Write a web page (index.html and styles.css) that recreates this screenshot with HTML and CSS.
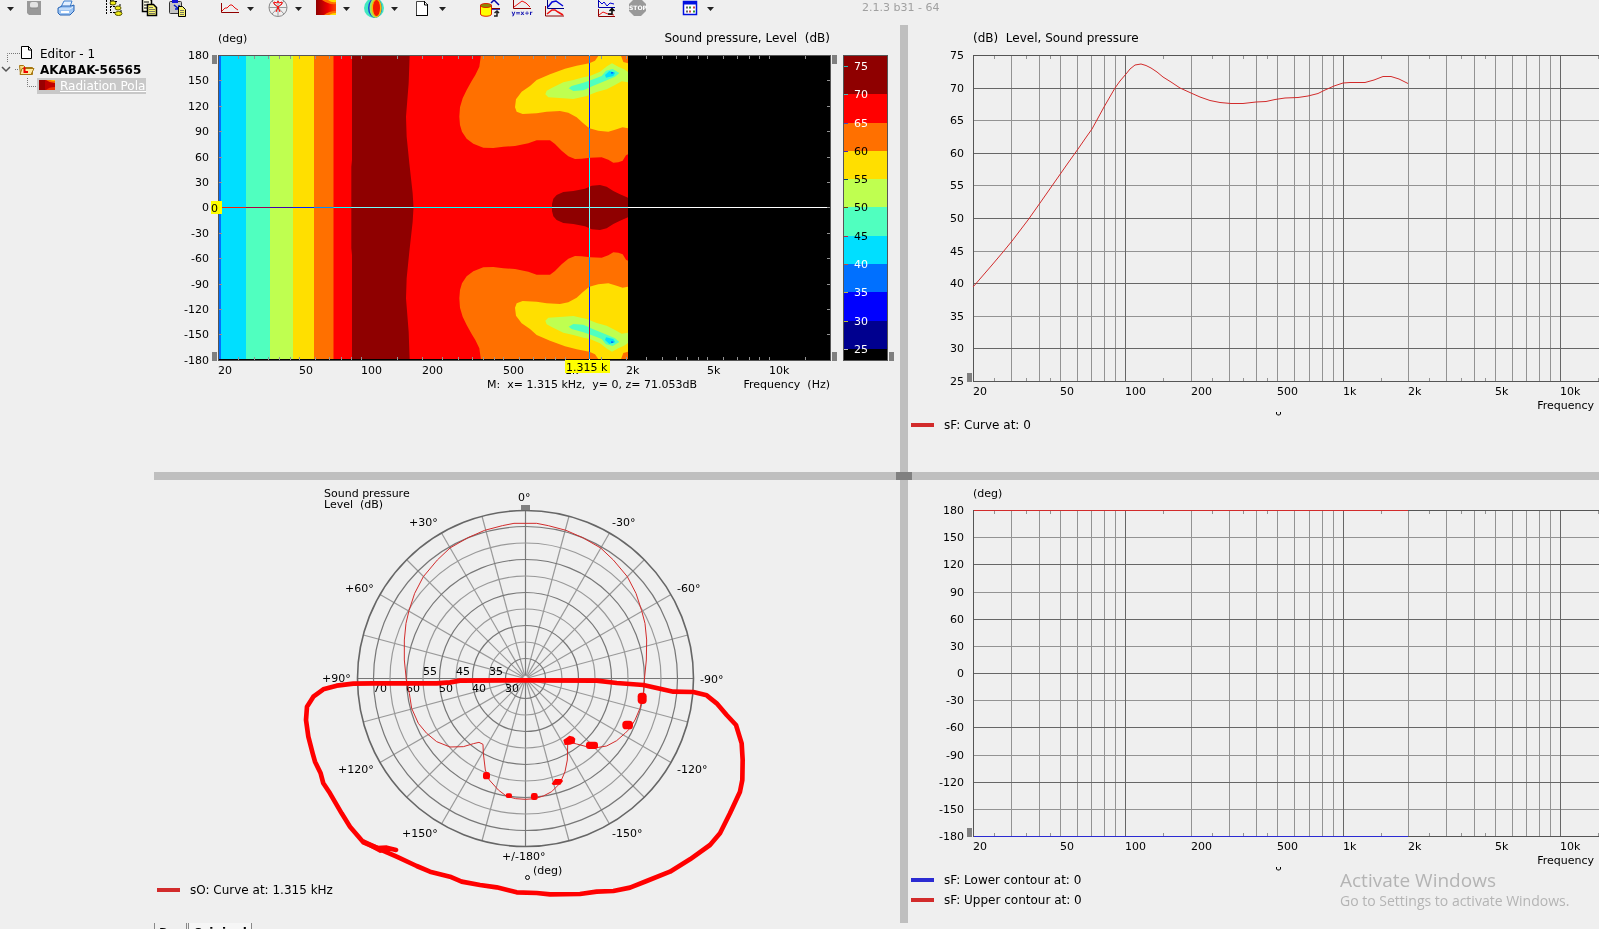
FILE: index.html
```html
<!DOCTYPE html>
<html lang="en">
<head>
<meta charset="utf-8">
<title>AKABAK-56565</title>
<link rel="stylesheet" href="styles.css">
</head>
<body>
<header class="toolbar">
  <div class="group group-file">
    <button class="drop" aria-label="File menu"><svg viewBox="0 0 8 17"><path d="M3 7h7L6.500 11z"/></svg></button>
    <button class="tool" aria-label="Save"><svg viewBox="0 0 20 17"><path d="M3 1h14v14H5l-2-2z" fill="#999"/><rect x="6" y="2" width="8" height="6" rx="2" fill="#e4e4e4"/><path d="M6 8h8" stroke="#888"/></svg></button>
    <button class="tool" aria-label="Print"><svg viewBox="0 0 20 17"><path d="M5 7l3-6h8l-2 6z" fill="#e3f0ff" stroke="#3c7fd0"/><path d="M2 8l4-2h9l3-1v6l-4 4H4l-2-2z" fill="#9cc4f3" stroke="#2864b4"/><path d="M3 9h11l3-2" fill="none" stroke="#eaf4ff"/><path d="M5 12h8" stroke="#fff" stroke-width="2"/></svg></button>
  </div>
  <div class="group group-edit">
    <button class="tool" aria-label="Tree"><svg viewBox="0 0 20 17"><path d="M2.500 0v14M6.500 0v13M6 6.500h5M6 12.500h5" stroke="#000" stroke-dasharray="2 1" fill="none"/><g fill="#f1ed1b" stroke="#555200"><ellipse cx="9" cy="3" rx="3" ry="2"/><ellipse cx="14" cy="8" rx="3" ry="2"/><ellipse cx="14.500" cy="13.500" rx="3.500" ry="2"/></g><path d="M7 0h3M11 1.500h2M15 5h2M16 11h2" stroke="#000"/></svg></button>
    <button class="tool" aria-label="Copy"><svg viewBox="0 0 20 17"><path d="M6.500-2.500h6l3 3v11h-9z" fill="#ffffe8" stroke="#000" stroke-width="1.500"/><path d="M8 2h5M8 5h4M8 8h4" stroke="#000"/><path d="M11.500 4.500h6l3 3v8h-9z" fill="#f7f370" stroke="#000" stroke-width="1.500"/><path d="M13 7.500h4M13 9.500h6M13 11.500h6M13 13.500h6" stroke="#776"/></svg></button>
    <button class="tool" aria-label="Paste"><svg viewBox="0 0 20 17"><rect x="1.500" y="1.500" width="12" height="12" rx="1" fill="#c4c4c4" stroke="#333"/><path d="M4 0h6v3H4z" fill="#1414d8"/><path d="M6 5l5 4M11 5v4H7" stroke="#0018c8" stroke-width="1.500" fill="none"/><path d="M10.500 6.500h4l3 3v7h-7z" fill="#f6f26c" stroke="#000"/><path d="M12 10.500h4M12 12.500h4M12 14.500h4" stroke="#776"/></svg></button>
  </div>
  <div class="group group-views">
    <div class="split">
      <button class="tool" aria-label="Curve"><svg viewBox="0 0 20 17"><path d="M1.500 3v9.500H19" stroke="#8f0000" fill="none"/><path d="M2 11l3-3h2l3-3h2l3 3 3 2" stroke="#e81010" fill="none"/></svg></button>
      <button class="drop" aria-label="Curve options"><svg viewBox="0 0 8 17"><path d="M1 7h7L4.500 11z"/></svg></button>
    </div>
    <div class="split">
      <button class="tool" aria-label="Polar"><svg viewBox="0 0 20 17"><circle cx="10" cy="7.500" r="9" fill="none" stroke="#888"/><path d="M1 7.500h18M10 0v17M4 1l12 13M16 1L4 14" stroke="#999"/><path d="M10 7L6 4V2l3 1 1-2 1 2 3-1v2zM10 7l-2 5M10 7l2 5" fill="none" stroke="#f00"/></svg></button>
      <button class="drop" aria-label="Polar options"><svg viewBox="0 0 8 17"><path d="M1 7h7L4.500 11z"/></svg></button>
    </div>
    <div class="split">
      <button class="tool" aria-label="Contour"><svg viewBox="0 0 20 17"><defs><linearGradient id="heat"><stop offset="0" stop-color="#8f0000"/><stop offset=".6" stop-color="#e00"/><stop offset="1" stop-color="#f40"/></linearGradient></defs><path d="M0 0h20v15H0z" fill="url(#heat)"/><path d="M6 0q7 5 14 4V0zM8 15q5-4 12-4v4z" fill="#ff7000"/><path d="M12 0q4 3 8 2V0zM13 15q3-2 7-2v2z" fill="#ffdf00"/></svg></button>
      <button class="drop" aria-label="Contour options"><svg viewBox="0 0 8 17"><path d="M1 7h7L4.500 11z"/></svg></button>
    </div>
    <div class="split">
      <button class="tool" aria-label="Balloon"><svg viewBox="0 0 20 17"><circle cx="10" cy="8" r="10" fill="#40e8c0"/><ellipse cx="11" cy="8" rx="7" ry="10" fill="#1745d8"/><ellipse cx="11.500" cy="8" rx="6" ry="10" fill="#9be860"/><ellipse cx="12.500" cy="8" rx="5" ry="9" fill="#ffb000"/><ellipse cx="12.500" cy="8" rx="3.500" ry="8" fill="#f21800"/></svg></button>
      <button class="drop" aria-label="Balloon options"><svg viewBox="0 0 8 17"><path d="M1 7h7L4.500 11z"/></svg></button>
    </div>
    <div class="split">
      <button class="tool" aria-label="New page"><svg viewBox="0 0 20 17"><path d="M4.500 1.500h8l3 3v11h-11z" fill="#fff" stroke="#444"/><path d="M12.500 1v4H16M15.500 4v11.500H4" fill="none" stroke="#000"/></svg></button>
      <button class="drop" aria-label="Page options"><svg viewBox="0 0 8 17"><path d="M1 7h7L4.500 11z"/></svg></button>
    </div>
  </div>
  <div class="group group-data">
    <button class="tool" aria-label="Data"><svg viewBox="0 0 20 17"><path d="M11 3l3-3 5 5M12 9h8" stroke="#0000a8" stroke-width="1.500" fill="none"/><path d="M12 8.500h8" stroke="#800000"/><path d="M.5 5v9c0 3 11 3 11 0V5z" fill="#ff0" stroke="#e02000"/><ellipse cx="6" cy="5.500" rx="5.500" ry="2" fill="#8b8b00" stroke="#e02000"/><path d="M14 16h3v-4M14.500 13l2.500-2 2 2" stroke="#222" stroke-width="1.500" fill="none"/></svg></button>
    <button class="tool" aria-label="Formula"><svg viewBox="0 0 20 17"><path d="M1.500 0v8.500H19" stroke="#8f0000" fill="none"/><path d="M2 7l4-3 4-3 4 2 4 4" stroke="#f01010" fill="none"/><text x="10" y="15" class="icon-text">y=x+r</text></svg></button>
    <button class="tool" aria-label="Compare"><svg viewBox="0 0 20 17"><path d="M3.500 0v8.500H20" stroke="#000080" fill="none"/><path d="M4 7l4-5 4-1 7 5" stroke="#0808d8" stroke-width="1.500" fill="none"/><path d="M1.500 6v10H20" stroke="#8f0000" fill="none"/><path d="M3 14l5-4h3l3 2 5 3" stroke="#f01010" stroke-width="1.500" fill="none"/></svg></button>
  </div>
  <div class="group group-run">
    <button class="tool" aria-label="Process"><svg viewBox="0 0 20 17"><path d="M2.500 0v7.500H19" stroke="#0000a8" fill="none"/><path d="M3 1l3 3 2-2 3 4 3-3 4 1" stroke="#0000d8" fill="none"/><path d="M2.500 9v7.500H19" stroke="#8f0000" fill="none"/><path d="M3 15l4-3 5 2 6 1" stroke="#f01010" fill="none"/><path d="M12 14h4V9M13.500 11L16 8.500l2.500 2.500" stroke="#000" stroke-width="1.500" fill="none"/></svg></button>
    <button class="tool" aria-label="Stop"><svg viewBox="0 0 20 17"><path d="M6-1h7l5 5v7l-5 5H6l-5-5V4z" fill="#999"/><text x="10" y="10" class="stop-text">STOP</text></svg></button>
  </div>
  <div class="group group-table">
    <div class="split">
      <button class="tool" aria-label="Table"><svg viewBox="0 0 20 17"><path d="M3.500 1.500h13v13h-13z" fill="#fff" stroke="#0010e0" stroke-width="1.500"/><path d="M3 3h14" stroke="#0010e0" stroke-width="3"/><path d="M6 7.500h2M6 11.500h2" stroke="#666" stroke-width="2"/><path d="M9 7.500h2M13 11.500h2" stroke="#393" stroke-width="2"/><path d="M13 7.500h2M9 11.500h2" stroke="#c44" stroke-width="2"/></svg></button>
      <button class="drop" aria-label="Table options"><svg viewBox="0 0 8 17"><path d="M1 7h7L4.500 11z"/></svg></button>
    </div>
  </div>
  <span class="version">2.1.3 b31 - 64</span>
</header>

<main class="workspace">
  <nav class="sidebar">
    <ul class="tree">
      <li class="row row-editor">
        <svg class="row-lead" viewBox="0 0 40 16"><path d="M7.500 16V7.500H20" class="dots"/><path d="M21.500 .5h7l3 3v9h-10z" fill="#fff" stroke="#000"/><path d="M28.500 0v4H32" fill="none" stroke="#000"/></svg><a href="#editor">Editor - 1</a>
      </li>
      <li class="row row-project">
        <svg class="row-lead" viewBox="0 0 40 16"><path d="M2 5l4 4 4-4" fill="none" stroke="#555" stroke-width="1.500"/><path d="M15 7.500h4" class="dots"/><path d="M19.500 3.500h4l2 2h7v7h-12z" fill="#f7dc86" stroke="#a67711"/><path d="M22 6.500h12l-3 6H20z" fill="#ffe9a0" stroke="#a67711"/><path d="M24.500 5v5H28" fill="none" stroke="#e00" stroke-width="2"/></svg><a href="#project">AKABAK-56565</a>
      </li>
      <li class="row row-selected">
        <svg class="row-guide" viewBox="0 0 37 16"><path d="M27.500 0v8.500H37" class="dots"/></svg><a href="#radiation"><svg class="row-heat" viewBox="0 0 23 16"><path d="M2 2h16v10H2z" fill="#c00000"/><path d="M2 2h6v10H2z" fill="#900"/><path d="M9 2q4 3 9 3V2z" fill="#ff7000"/><path d="M13 2q2 1 5 1V2z" fill="#ffd000"/><path d="M9 12q3-3 9-3v3z" fill="#f03000"/></svg><span>Radiation Polar</span></a>
      </li>
    </ul>
  </nav>

  <section class="pane pane-contour" aria-label="Contour plot">
    <svg class="chart" viewBox="154 25 746 447">
      <defs>
        <clipPath id="upper"><path d="M219 56h409v152H219z"/></clipPath>
        <g id="field">
          <g clip-path="url(#upper)">
            <path d="M219 56h409v152H219z" fill="#f00"/>
            <path d="M219 56h3v152h-3z" fill="#0070ff"/>
            <path d="M221 56h25v152h-25z" fill="#00dfff"/>
            <path d="M246 56h24v152h-24z" fill="#50ffbf"/>
            <path d="M270 56h23v152h-23z" fill="#bfff50"/>
            <path d="M293 56h21v152h-21z" fill="#ffdf00"/>
            <path d="M314 56h19.500v152H314z" fill="#ff7000"/>
            <g transform="translate(200 20) scale(.33333)">
              <path d="M456 105H629L626 190 618 290 620 350 628 430 638 520 641 570H454V440L456 420z" fill="#8f0000"/>
              <path d="M843 105L838 140 826 165 815 183 800 210 788 235 780 262 778 290 780 315 786 335 800 356 820 371 850 383 880 384 910 380 945 378 985 370 1010 361 1050 361 1065 372 1085 392 1105 409 1125 417 1145 416 1170 413 1205 412 1225 419 1240 428 1255 427 1268 422 1278 406 1285 402V105z" fill="#ff7000"/>
              <path d="M1197 105L1185 122 1168 130 1130 137 1095 146 1050 163 1010 180 990 198 965 215 948 238 945 262 950 275 968 282 1010 280 1040 275 1080 273 1105 278 1130 292 1148 308 1168 325 1195 332 1225 335 1245 329 1268 322 1285 325V130L1270 126 1262 105z" fill="#ffdf00"/>
              <path d="M1036 223L1040 212 1055 204 1090 187 1120 180 1150 172 1170 168 1200 155 1222 138 1236 130 1255 140 1272 148 1285 157V187L1265 184 1245 195 1220 208 1190 216 1160 228 1120 237 1090 235 1045 232z" fill="#bfff50"/>
              <path d="M1106 205L1115 198 1150 188 1180 178 1205 168 1218 152 1238 147 1258 159 1245 170 1215 183 1180 197 1150 211 1120 213z" fill="#50ffbf"/>
              <path d="M1215 165L1228 153 1246 158 1240 168 1218 173z" fill="#00dfff"/>
              <path d="M1233 156h7v5h-7z" fill="#0070ff"/>
              <path d="M1056 570V552L1060 536 1070 525 1090 516 1120 513 1155 506 1175 497 1200 495 1220 500 1240 513 1260 523 1285 534V570z" fill="#8f0000"/>
            </g>
          </g>
        </g>
      </defs>
      <path d="M218 55h613v306H218z" fill="#000"/>
      <use href="#field"/>
      <use href="#field" transform="translate(0 415) scale(1 -1)"/>
      <g id="contour-axes"></g>
      <path class="frame" d="M218.500 55.500h612v305h-612z"/>
      <g class="cursor"><path d="M589.500 55v306M222 207.500h605"/></g>
      <path class="handle" d="M212 55h5v9h-5zM212 352h5v9h-5zM832 55h5v9h-5zM832 352h5v9h-5zM889 352h5v9h-5z"/>
      <g id="colorbar"></g>
      <path d="M211 201h11v13h-11zM565 360h45v13h-45z" fill="#ff0"/>
      <text x="211" y="212">0</text>
      <text x="566" y="371">1.315 k</text>
      <text x="218" y="42">(deg)</text>
      <text x="830" y="42" class="caption end">Sound pressure, Level  (dB)</text>
      <text x="487" y="388">M:  x= 1.315 kHz,  y= 0, z= 71.053dB</text>
      <text x="830" y="388" class="end">Frequency  (Hz)</text>
    </svg>
  </section>

  <section class="pane pane-level" aria-label="Level over frequency">
    <svg class="chart" viewBox="908 25 691 447">
      <g id="level-axes"></g>
      <path class="curve" d="M973 287L992 265 1003 252 1012 241 1028 220 1040 203 1061 173 1068 163 1078 149 1087 136 1092 129 1104 107 1115 88 1120 81 1126 74 1130 69 1135 65 1141 64 1146 65.500 1151 68 1157 72 1163 77 1171 82 1180 88 1191 93 1200 97 1210 100.500 1220 102.500 1231 103.500 1243 103.500 1256 102 1266 101.500 1275 99.500 1285 98 1298 97.500 1308 96 1318 93.500 1325 90 1334 86 1343 83 1350 82.500 1365 82.500 1374 80 1383 76.500 1391 76.500 1399 79 1408 83.500"/>
      <text x="973" y="42" class="caption">(dB)  Level, Sound pressure</text>
      <text x="1594" y="409" class="end">Frequency</text>
      <path class="mark" d="M1276.500 412v2l1 1h2l1-1v-2"/>
      <path class="handle" d="M967 373h5v9h-5z"/>
      <path d="M911 423h23v4h-23z" fill="#d22b2b"/>
      <text x="944" y="429" class="caption">sF: Curve at: 0</text>
    </svg>
  </section>

  <section class="pane pane-polar" aria-label="Polar plot">
    <svg class="chart" viewBox="154 480 746 443">
      <g id="polar-grid"></g>
      <path class="handle" d="M521 505h9v5h-9z"/>
      <g id="polar-labels"></g>
      <text x="324" y="497">Sound pressure</text>
      <text x="324" y="508">Level  (dB)</text>
      <text x="533" y="874">(deg)</text>
      <circle class="mark" cx="527.500" cy="877.500" r="2"/>
      <g transform="translate(290 480) scale(.33333)">
        <path class="lobe" d="M706 130H740L775 137 828 151 880 174 932 204 970 240 1012 290 1038 340 1055 392 1065 430 1070 480 1069 540 1063 600 1060 640 1050 685 1035 720 1020 745 1005 760 980 782 950 798 920 803 890 800 860 792 838 786 833 795 832 840 825 875 810 910 785 935 760 948 735 956 706 958 677 956 650 949 625 930 598 900 586 870 580 820 579 793 567 787 550 791 520 800 480 801 440 785 410 760 385 730 365 685 358 640 349 600 343 540 343 480 348 430 357 392 374 340 400 290 442 240 480 204 532 174 584 151 637 137 672 130z"/>
        <path class="scribble" d="M318 1110L290 1103 262 1104 220 1087 180 1040 155 1000 120 940 100 910 92 880 75 845 68 820 55 770 48 720 51 680 70 650 100 628 140 617 190 611 250 610 440 610 480 607 510 602 700 601 920 602 980 609 1060 615 1110 626 1150 635 1210 636 1250 646 1280 670 1310 705 1338 735 1355 790 1358 840 1357 900 1350 935 1320 1000 1290 1060 1260 1095 1200 1138 1140 1175 1070 1203 1020 1223 970 1233 920 1235 870 1242 780 1243 740 1239 680 1237 620 1222 570 1215 515 1205 480 1190 420 1175 380 1158 320 1130 270 1108 220 1087"/>
        <path d="M216 1090l6-12 44 20 28 3v12l-24 6z" fill="#f00"/>
        <g fill="#f00">
          <rect x="1043" y="638" width="27" height="34" rx="11"/>
          <rect x="997" y="722" width="32" height="26" rx="11"/>
          <path d="M820 780l10-7 8-6 12 3 6 6-2 14-14 4-16 1z"/>
          <rect x="888" y="785" width="36" height="22" rx="9"/>
          <rect x="579" y="876" width="21" height="22" rx="8"/>
          <rect x="647" y="940" width="19" height="14" rx="6"/>
          <rect x="723" y="939" width="20" height="21" rx="7"/>
          <path d="M785 911l10-14h20l4 6-8 11-22 1z"/>
        </g>
      </g>
      <path d="M157 888h23v4h-23z" fill="#d22b2b"/>
      <text x="190" y="894" class="caption">sO: Curve at: 1.315 kHz</text>
    </svg>
  </section>

  <section class="pane pane-angle" aria-label="Contour angle over frequency">
    <svg class="chart" viewBox="908 480 691 443">
      <g id="angle-axes"></g>
      <path d="M974 510.500h434" stroke="#d22b2b"/>
      <path d="M974 836.500h434" stroke="#2b2bd2"/>
      <text x="973" y="497">(deg)</text>
      <text x="1594" y="864" class="end">Frequency</text>
      <path class="mark" d="M1276.500 867v2l1 1h2l1-1v-2"/>
      <path class="handle" d="M967 828h5v9h-5z"/>
      <path d="M911 878h23v4h-23z" fill="#2b2bd2"/>
      <text x="944" y="884" class="caption">sF: Lower contour at: 0</text>
      <path d="M911 898h23v4h-23z" fill="#d22b2b"/>
      <text x="944" y="904" class="caption">sF: Upper contour at: 0</text>
    </svg>
    <div class="activate">
      <p class="activate-title">Activate Windows</p>
      <p class="activate-text">Go to Settings to activate Windows.</p>
    </div>
  </section>

  <div class="bar bar-x"></div>
  <div class="bar bar-y"><span class="grip"></span></div>
</main>

<footer class="tabs">
  <button class="tab">Doc</button>
  <button class="tab tab-active">Original</button>
</footer>
<script src="charts.js"></script>
</body>
</html>
```

FILE: styles.css
```css
* { box-sizing: border-box; }

html, body { height: 100%; }

body {
  margin: 0;
  display: flex;
  flex-direction: column;
  overflow: hidden;
  background: #efefef;
  color: #000;
  font: 11px/16px "DejaVu Sans", Verdana, sans-serif;
}

button {
  padding: 0;
  border: 0;
  background: none;
  color: inherit;
  font: inherit;
}

a { color: inherit; text-decoration: none; }

.toolbar {
  display: flex;
  flex: none;
  align-items: flex-start;
  height: 25px;
  overflow: hidden;
}

.group { display: flex; gap: 12px; }
.group-file { margin-left: 4px; }
.group-edit { margin-left: 28px; }
.group-views { margin-left: 32px; gap: 14px; }
.group-data { margin-left: 34px; }
.group-run, .group-table { margin-left: 32px; }
.split { display: flex; gap: 6px; }

.tool { width: 20px; height: 17px; }
.drop { width: 8px; height: 17px; }
.tool svg, .drop svg { display: block; width: 100%; height: 17px; overflow: visible; }
.drop svg { fill: #222; }

.icon-text { font-size: 6px; font-weight: bold; fill: #1010b0; text-anchor: middle; }
.stop-text { font-size: 6px; font-weight: bold; fill: #fff; text-anchor: middle; }

.version {
  margin-left: 148px;
  color: #a0a0a0;
  line-height: 16px;
}

.workspace {
  display: grid;
  flex: none;
  grid-template-columns: 154px minmax(0, 746fr) 8px minmax(0, 691fr);
  grid-template-rows: auto 8px auto;
}

.sidebar { grid-area: 1 / 1 / 4 / 2; padding: 21px 8px 0 0; overflow: hidden; }
.tree { margin: 0; padding: 0; list-style: none; font-size: 12px; }
.row { display: flex; height: 16px; white-space: nowrap; overflow: hidden; }
.row-project { font-weight: bold; }
.row-lead { flex: none; width: 40px; height: 16px; }
.row-guide { flex: none; width: 37px; height: 16px; }
.row-heat { flex: none; width: 23px; height: 16px; }
.row-selected a { display: flex; flex: 1; background: #c8c8c8; color: #fff; }
.row-selected span { text-decoration: underline; }
.dots { fill: none; stroke: #777; stroke-dasharray: 1 1; }

.pane { position: relative; min-width: 0; }
.pane-contour { grid-area: 1 / 2; }
.pane-level { grid-area: 1 / 4; }
.pane-polar { grid-area: 3 / 2; }
.pane-angle { grid-area: 3 / 4; }

.bar { background: #bfbfbf; }
.bar-x { grid-area: 2 / 2 / 3 / 5; }
.bar-y { grid-area: 1 / 3 / 4 / 4; display: grid; grid-template-rows: 447fr 8px 443fr; }
.grip { grid-row: 2; position: relative; left: -4px; width: 16px; background: #808080; }

.chart { display: block; width: 100%; height: auto; }
.chart text { white-space: pre; }
.chart .caption { font-size: 12px; }
.chart .end { text-anchor: end; }
.chart .light { fill: #fff; }

.frame { fill: none; stroke: #555; shape-rendering: crispEdges; }
.major { fill: none; stroke: #666; shape-rendering: crispEdges; }
.minor { fill: none; stroke: #939393; shape-rendering: crispEdges; }
.ring-major { fill: none; stroke: #777; stroke-width: 1.2; }
.ring-minor { fill: none; stroke: #999; stroke-width: 1.2; }
.ring-outer { fill: none; stroke: #666; stroke-width: 1.6; }
.cursor, .bar-tick { fill: none; stroke: #fff; mix-blend-mode: difference; shape-rendering: crispEdges; }
.bar-tick { stroke: #bbb; }
.handle { fill: #808080; }
.mark { fill: none; stroke: #000; }
.curve { fill: none; stroke: #d22b2b; }
.lobe { fill: none; stroke: #d22b2b; stroke-width: 3; }
.scribble { fill: none; stroke: #f00; stroke-width: 14; stroke-linecap: round; stroke-linejoin: round; }

.activate {
  position: absolute;
  left: 432px;
  bottom: 12px;
  color: #b4b4b4;
  font-family: "Open Sans", "Segoe UI", sans-serif;
  white-space: nowrap;
}
.activate p { margin: 0; }
.activate-title { font-size: 19px; line-height: 22px; }
.activate-text { font-size: 14px; line-height: 20px; }

.tabs { display: flex; flex: none; gap: 1px; margin-left: 154px; font-size: 12px; }
.tab { height: 20px; padding: 0 4px; border: solid #888; border-width: 0 1px; line-height: 16px; }
.tab-active { background: #f6f6f6; font-weight: bold; }
```

FILE: charts.js
```js
const NS = "http://www.w3.org/2000/svg";

function add(parent, tag, attrs, text) {
  const node = document.createElementNS(NS, tag);
  for (const key in attrs) node.setAttribute(key, attrs[key]);
  if (text !== undefined) node.textContent = text;
  parent.appendChild(node);
}

const FREQ_LABELS = [[20, "20"], [50, "50"], [100, "100"], [200, "200"], [500, "500"],
  [1000, "1k"], [2000, "2k"], [5000, "5k"], [10000, "10k"]];

const LINES = [];
const TICKS = [];
for (const decade of [10, 100, 1000, 10000]) {
  for (let i = 1; i < 10; i++) {
    if (decade * i > 20 && decade * i < 20000) LINES.push(decade * i);
    if (i < 5 && decade * (i + 0.5) > 20 && decade * (i + 0.5) < 20000) TICKS.push(decade * (i + 0.5));
  }
}

// Frequency plots with a full grid
function gridPlot(id, top, bottom, labels) {
  const g = document.getElementById(id);
  const x = f => Math.floor(973.6 + 217.5 * Math.log10(f / 20));
  const step = (bottom - top) / (labels.length - 1);
  let minor = "", major = "";
  for (const f of LINES) {
    const line = `M${x(f) + 0.5} ${top}V${bottom}`;
    if (Number.isInteger(Math.log10(f))) major += line; else minor += line;
  }
  for (const f of TICKS) minor += `M${x(f) + 0.5} ${top}v4M${x(f) + 0.5} ${bottom}v-3`;
  labels.forEach((label, i) => {
    const y = Math.round(top + step * i);
    const line = `M973 ${y + 0.5}H1626`;
    if (i % 2 === labels.majorAt) major += line; else minor += line;
    add(g, "text", { x: 964, y: y + 4, class: "end" }, label);
  });
  add(g, "path", { d: minor, class: "minor" });
  add(g, "path", { d: major, class: "major" });
  add(g, "path", { d: `M973.5 ${top + 0.5}H1626V${bottom + 0.5}H973.5z`, class: "frame" });
  for (const [f, label] of FREQ_LABELS) add(g, "text", { x: x(f), y: bottom + 14 }, label);
}

const levels = [75, 70, 65, 60, 55, 50, 45, 40, 35, 30, 25];
levels.majorAt = 1;
gridPlot("level-axes", 55, 381, levels);

const angles = [180, 150, 120, 90, 60, 30, 0, -30, -60, -90, -120, -150, -180];
angles.majorAt = 0;
gridPlot("angle-axes", 510, 836, angles);

// Contour axes: ticks on all four sides
{
  const g = document.getElementById("contour-axes");
  const x = f => Math.floor(218.5 + 204 * Math.log10(f / 20));
  let d = "";
  for (const f of LINES.concat(TICKS)) d += `M${x(f) + 0.5} 56v3M${x(f) + 0.5} 360v-3`;
  angles.forEach((angle, i) => {
    const y = Math.round(55 + 25.4 * i);
    d += `M219 ${y + 0.5}h3M830 ${y + 0.5}h-3`;
    add(g, "text", { x: 209, y: y + 4, class: "end" }, angle);
  });
  add(g, "path", { d, class: "minor" });
  for (const [f, label] of FREQ_LABELS) add(g, "text", { x: x(f), y: 374 }, label);
}

// Colour scale
{
  const g = document.getElementById("colorbar");
  const edges = [56, 94, 123, 151, 179, 207, 236, 264, 292, 321, 349, 361];
  const colors = ["#8f0000", "#f00", "#ff7000", "#ffdf00", "#bfff50", "#50ffbf", "#00dfff", "#0070ff", "#00f", "#00008f", "#000"];
  colors.forEach((fill, i) => add(g, "rect", { x: 843, y: edges[i], width: 45, height: edges[i + 1] - edges[i], fill }));
  add(g, "path", { d: "M843.5 55.5h44v305h-44z", class: "frame" });
  levels.forEach((level, i) => {
    const y = i === 0 ? 66 : edges[i];
    const dark = level <= 60 && level >= 45;
    add(g, "path", { d: `M844 ${y + 0.5}h4`, class: "bar-tick" });
    add(g, "text", { x: 854, y: y + 4, class: dark ? "" : "light" }, level);
  });
}

// Polar grid
{
  const g = document.getElementById("polar-grid");
  const cx = 525.5, cy = 678.5;
  for (let a = 0; a < 360; a += 15) {
    const c = Math.cos(a * Math.PI / 180), s = Math.sin(a * Math.PI / 180);
    add(g, "path", {
      d: `M${cx + 3 * c} ${cy + 3 * s}L${cx + 168 * c} ${cy + 168 * s}`,
      class: a % 90 === 0 ? "ring-major" : "ring-minor"
    });
  }
  for (let i = 0; i < 9; i++) {
    add(g, "circle", { cx, cy, r: 20 + 16.5 * i, class: i % 2 === 0 ? "ring-major" : "ring-minor" });
  }
  add(g, "circle", { cx, cy, r: 168, class: "ring-outer" });
  add(g, "circle", { cx, cy, r: 3, class: "ring-minor" });

  const labels = document.getElementById("polar-labels");
  const items = [["0°", 518, 501], ["+30°", 409, 526], ["-30°", 612, 526], ["+60°", 345, 592], ["-60°", 677, 592],
    ["+90°", 322, 682], ["-90°", 700, 683], ["+120°", 338, 773], ["-120°", 677, 773], ["+150°", 402, 837],
    ["-150°", 612, 837], ["+/-180°", 502, 860], ["55", 423, 675], ["45", 456, 675], ["35", 489, 675],
    ["70", 373, 692], ["60", 406, 692], ["50", 439, 692], ["40", 472, 692], ["30", 505, 692]];
  for (const [label, x, y] of items) add(labels, "text", { x, y }, label);
}
```
